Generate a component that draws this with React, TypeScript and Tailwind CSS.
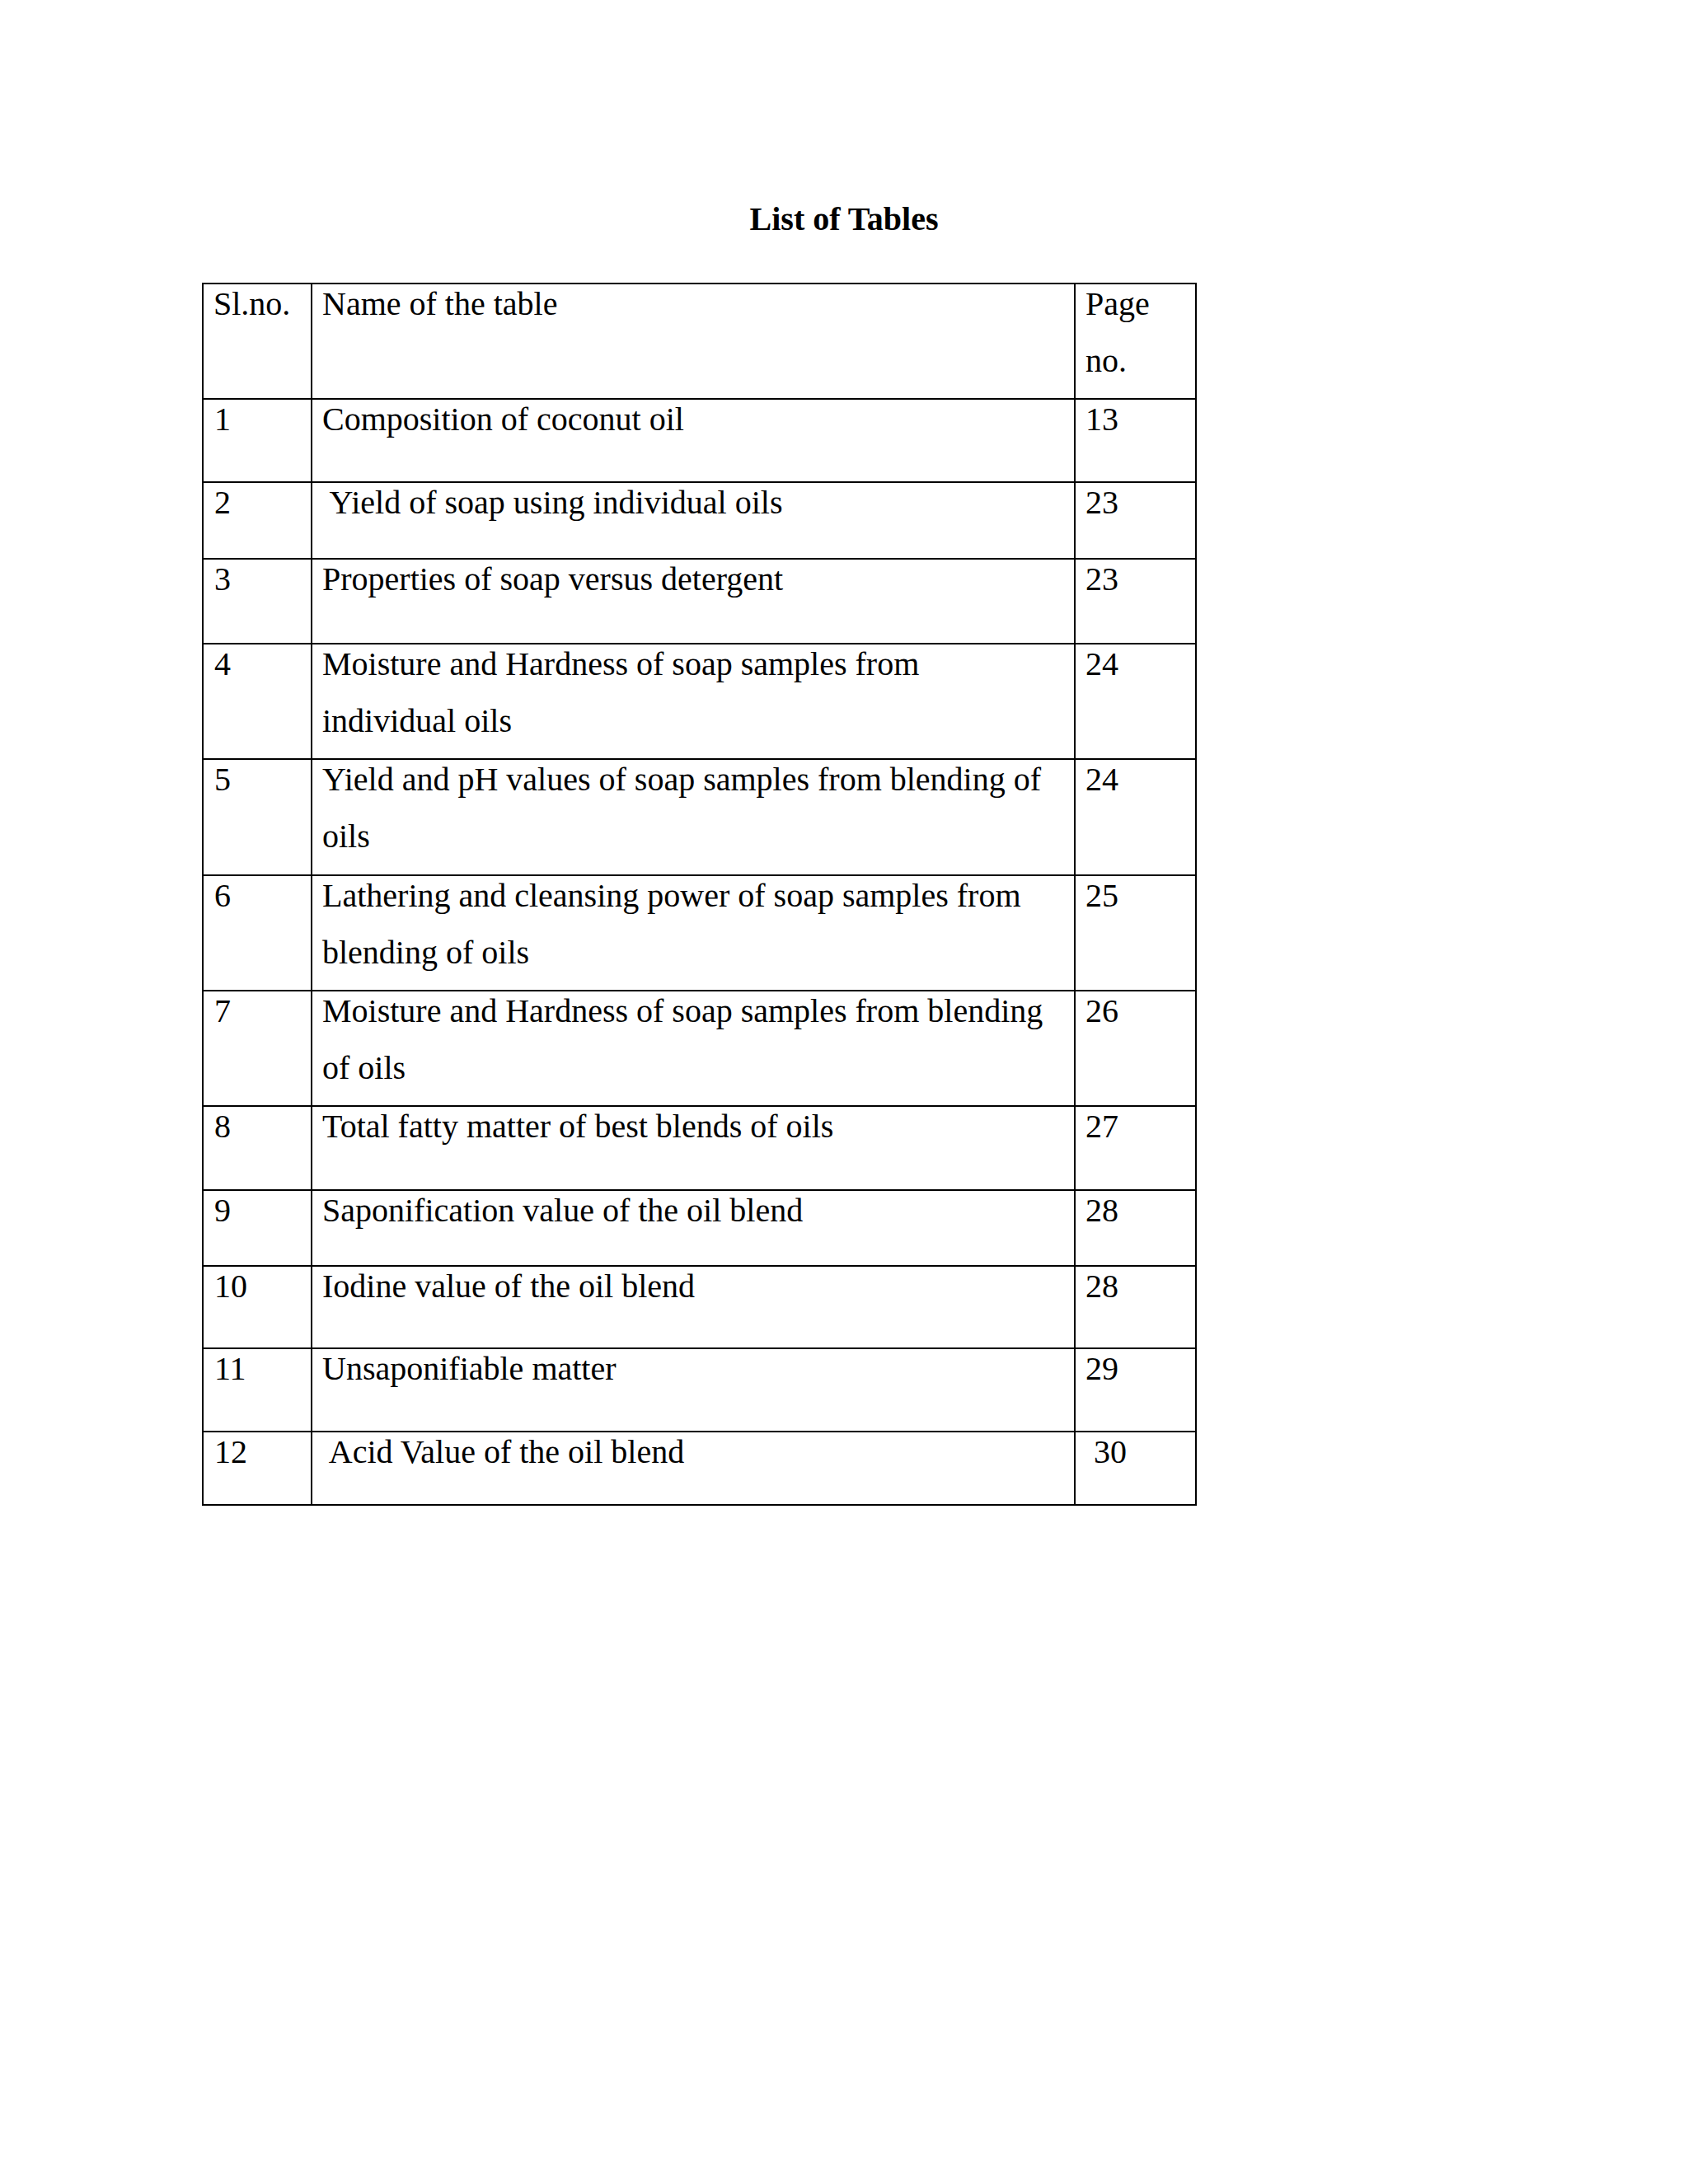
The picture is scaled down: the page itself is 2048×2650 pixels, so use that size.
import React from "react";

type Row = { n: string; name: string[]; page: string; h: string };

const rows: Row[] = [
  { n: "1", name: ["Composition of coconut oil"], page: "13", h: "h-[101px]" },
  { n: "2", name: [" Yield of soap using individual oils"], page: "23", h: "h-[93px]" },
  { n: "3", name: ["Properties of soap versus detergent"], page: "23", h: "h-[103px]" },
  { n: "4", name: ["Moisture and Hardness of soap samples from", "individual oils"], page: "24", h: "h-[140px]" },
  { n: "5", name: ["Yield and pH values of soap samples from blending of", "oils"], page: "24", h: "h-[141px]" },
  { n: "6", name: ["Lathering and cleansing power of soap samples from", "blending of oils"], page: "25", h: "h-[140px]" },
  { n: "7", name: ["Moisture and Hardness of soap samples from blending", "of oils"], page: "26", h: "h-[140px]" },
  { n: "8", name: ["Total fatty matter of best blends of oils"], page: "27", h: "h-[102px]" },
  { n: "9", name: ["Saponification value of the oil blend"], page: "28", h: "h-[92px]" },
  { n: "10", name: ["Iodine value of the oil blend"], page: "28", h: "h-[100px]" },
  { n: "11", name: ["Unsaponifiable matter"], page: "29", h: "h-[101px]" },
  { n: "12", name: [" Acid Value of the oil blend"], page: " 30", h: "h-[87px]" },
];

function Cell({ lines, className }: { lines: string[]; className: string }) {
  return (
    <div className={className}>
      <div className="-mt-[10px] whitespace-pre leading-[68.5px]">
        {lines.map((l, i) => (
          <div key={i}>{l}</div>
        ))}
      </div>
    </div>
  );
}

export default function App() {
  return (
    <div
      className="min-h-[2650px] w-[2048px] bg-white pt-[246px] text-black text-[40px]"
      style={{ fontFamily: '"Liberation Serif", "Times New Roman", serif' }}
    >
      <div className="text-center font-bold leading-[40px]">List of Tables</div>
      <div className="ml-[245px] mt-[57px] w-[1207px] border-2 border-black">
        <div className="flex h-[140px] border-b-2 border-black">
          <Cell lines={["Sl.no."]} className="w-[132px] shrink-0 border-r-2 border-black pl-[12px]" />
          <Cell lines={["Name of the table"]} className="w-[926px] shrink-0 border-r-2 border-black pl-[12px]" />
          <Cell lines={["Page", "no."]} className="flex-1 pl-[12px]" />
        </div>
        {rows.map((r, i) => (
          <div
            key={r.n}
            className={`flex ${r.h} ${i < rows.length - 1 ? "border-b-2 border-black" : ""}`}
          >
            <Cell lines={[r.n]} className="w-[132px] shrink-0 border-r-2 border-black pl-[13px]" />
            <Cell lines={r.name} className="w-[926px] shrink-0 border-r-2 border-black pl-[12px]" />
            <Cell lines={[r.page]} className="flex-1 pl-[12px]" />
          </div>
        ))}
      </div>
    </div>
  );
}
